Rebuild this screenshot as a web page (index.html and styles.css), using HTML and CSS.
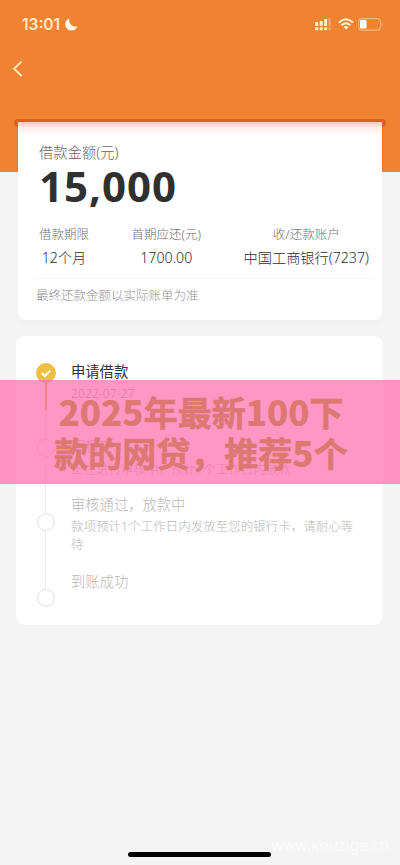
FILE: index.html
```html
<!DOCTYPE html>
<html lang="zh-CN">
<head>
<meta charset="utf-8">
<title>借款详情</title>
<link rel="stylesheet" href="styles.css">
</head>
<body>
<div class="screen">
  <header class="status">
    <span class="time">13:01</span>
    <svg class="moon" width="13" height="13" viewBox="0 0 13 13"><path d="M4.300 .5C3.200 4.800 7.300 9.600 12.300 8.300A6.200 6.200 0 1 1 4.300 .5Z" fill="#fff9e8"/></svg>
    <svg class="signal" width="17" height="13" viewBox="0 0 17 13"><g fill="#fff0cf"><path d="M.2 4h3v4h-3zM4.7 3h3v5h-3zM9.2 1h2.9v7H9.2zM.2 9.2h3v3h-3zM4.7 9.2h3v3h-3zM9.2 9.2h2.9v3H9.2z"/><path opacity=".3" d="M13.5 0h2.4v8h-2.4zM13.5 9.2h2.4v3h-2.4z"/></g></svg>
    <svg class="wifi" width="16" height="12" viewBox="0 0 16 12"><g fill="none" stroke="#fff3d5" stroke-width="2"><path d="M1 4.500Q8-1.900 15 4.500"/><path d="M3.500 7.200Q8 3.200 12.500 7.200"/></g><path d="M5.500 9Q8 7 10.500 9L8 11.600Z" fill="#fff3d5"/></svg>
    <svg class="battery" width="26" height="13" viewBox="0 0 26 13"><rect x=".6" y=".6" width="22" height="11.500" rx="3" fill="none" stroke="#fac28c" stroke-width="1"/><rect x="2" y="2" width="6.600" height="8.500" rx="1" fill="#fffdf4"/><path d="M24 4.500q1.500 1.800 0 3.600z" fill="#fac28c"/></svg>
  </header>
  <nav class="nav"><svg width="12" height="18" viewBox="0 0 12 18"><path d="M9.700 1.500L2 8.700l7.700 7.200" fill="none" stroke="#ffe4b5" stroke-width="2"/></svg></nav>
  <div class="slot"></div>
  <main>
    <section class="card summary">
      <div class="label">借款金额(元)</div>
      <div class="amount">15,000</div>
      <div class="facts">
        <div class="fact term"><span class="k">借款期限</span><span class="v">12个月</span></div>
        <div class="fact first"><span class="k">首期应还(元)</span><span class="v">1700.00</span></div>
        <div class="fact bank"><span class="k">收/还款账户</span><span class="v">中国工商银行(7237)</span></div>
      </div>
      <p class="note">最终还款金额以实际账单为准</p>
    </section>
    <section class="card steps">
      <div class="step done">
        <div class="rail"><svg class="check" width="20" height="20" viewBox="0 0 20 20"><circle cx="10" cy="10" r="10" fill="#f0bd45"/><path d="M5.800 10l3 3 5.500-5.400" fill="none" stroke="#fff" stroke-width="2"/></svg></div>
        <div class="body"><h2>申请借款</h2><p>2022-07-27</p></div>
      </div>
      <div class="step review">
        <div class="rail"><i class="dot"></i></div>
        <div class="body"><h2>审核中</h2><p>正在进行审核中，预计1个工作日内放款</p></div>
      </div>
      <div class="step paying">
        <div class="rail"><i class="dot"></i></div>
        <div class="body"><h2>审核通过，放款中</h2><p>款项预计1个工作日内发放至您的银行卡，请耐心等待</p></div>
      </div>
      <div class="step last">
        <div class="rail"><i class="dot"></i></div>
        <div class="body"><h2>到账成功</h2></div>
      </div>
    </section>
  </main>
  <div class="banner"><div><b>2025</b>年最新<b>100</b>下</div><div>款的网贷，推荐<b>5</b>个</div></div>
  <div class="home"></div>
  <div class="mark">www.kouzige.cn</div>
</div>
</body>
</html>
```
FILE: styles.css
```css
* { box-sizing: border-box; }
body { margin: 0; }
h2, p { margin: 0; font-weight: 300; }
svg { display: block; flex: none; }
.screen {
  position: relative;
  width: 400px;
  height: 865px;
  overflow: hidden;
  background: linear-gradient(#f08332 172px, #f4f4f4 172px);
  font-family: "Noto Sans", "Noto Sans CJK SC", sans-serif;
  font-weight: 300;
  color: #333;
}
.status { display: flex; align-items: flex-start; height: 58px; padding: 17.500px 16px 0 22px; }
.time { width: 39px; font: 600 15.500px/14px Inter, sans-serif; color: #ffe9c4; white-space: nowrap; }
.moon { margin-left: 4px; }
.signal { margin-left: auto; }
.wifi { margin: 0 4px 0 6px; }
.nav { height: 61px; padding: 2px 0 0 12px; }
.slot { height: 8px; margin: 0 14px; border-radius: 4px; background: #d5622b; }
main { margin-top: -5px; }
.card { position: relative; background: #fff; }
.summary {
  height: 198px;
  margin: 0 18px;
  padding: 22px 13px 0 21px;
  border-radius: 0 0 8px 8px;
  background: linear-gradient(#f9c6bc, #fdebe7 5px, #fff 14px);
  box-shadow: 0 3px 7px rgba(0, 0, 0, .025);
}
.label { font-size: 14.300px; line-height: 18px; color: #666; }
.amount { height: 62px; font: 700 42px/48px "Noto Sans", sans-serif; letter-spacing: 1px; color: #303030; }
.facts { display: flex; justify-content: space-between; height: 54px; }
.fact { display: flex; flex-direction: column; align-items: center; white-space: nowrap; }
.k { font-size: 12.500px; line-height: 20px; margin-top: 1px; color: #707070; }
.v { font-size: 14.200px; line-height: 22px; margin-top: 2px; color: #303030; }
.note { margin: 0 -5px 0 -3px; padding-top: 7px; border-top: 1px solid #f3f3f3; font-size: 12.500px; line-height: 19px; color: #929292; }
.steps { height: 289px; margin: 16px 17px 0 16px; padding: 26px 0 0 20px; border-radius: 9px; }
.step { display: flex; color: #b7b7b7; }
.rail { display: flex; flex-direction: column; align-items: center; width: 20px; margin-right: 15px; }
.rail::after { content: ""; flex: 1; width: 1px; background: #e9e9e9; }
.last .rail::after { display: none; }
.dot { flex: none; width: 18px; height: 18px; border: 1px solid #e0e0e0; border-radius: 50%; }
.step h2 { font-size: 14.300px; line-height: 20px; }
.step p { font-size: 12.500px; line-height: 18px; }
.done { height: 77px; }
.done h2 { color: #333; font-weight: 400; }
.done p { margin-top: 3px; color: #999; font-size: 12.200px; }
.done .rail { padding-top: 1px; }
.done .rail::after { width: 2px; background: linear-gradient(#edaf47 27px, #e9e9e9 27px); }
.review { height: 74px; }
.review .body { margin-top: -3px; }
.review p { margin-top: 5px; }
.paying { height: 76px; }
.last .body { margin-top: -17px; }
.paying .body { margin-top: -18px; }
.paying p { width: 287px; margin-top: 3px; }
.rail { margin-left: -.5px; margin-right: 15.500px; }
.banner {
  position: absolute;
  left: 0;
  top: 380px;
  width: 400px;
  height: 104px;
  padding: 11px 0 0 2px;
  background: rgba(255, 105, 169, .7);
  font: 700 34px/41px "Noto Sans CJK SC", sans-serif;
  color: #dc7772;
  -webkit-text-stroke: .6px #dc7772;
  text-align: center;
  white-space: nowrap;
}
.banner b { font-weight: 900; font-size: 35px; line-height: 1; -webkit-text-stroke: 0; }
.home { position: absolute; left: 128px; top: 852px; width: 143px; height: 5px; border-radius: 3px; background: #000; }
.mark { position: absolute; left: 271px; top: 835px; font: 400 15.500px/20px "Noto Sans", sans-serif; color: #fafafa; }
```
